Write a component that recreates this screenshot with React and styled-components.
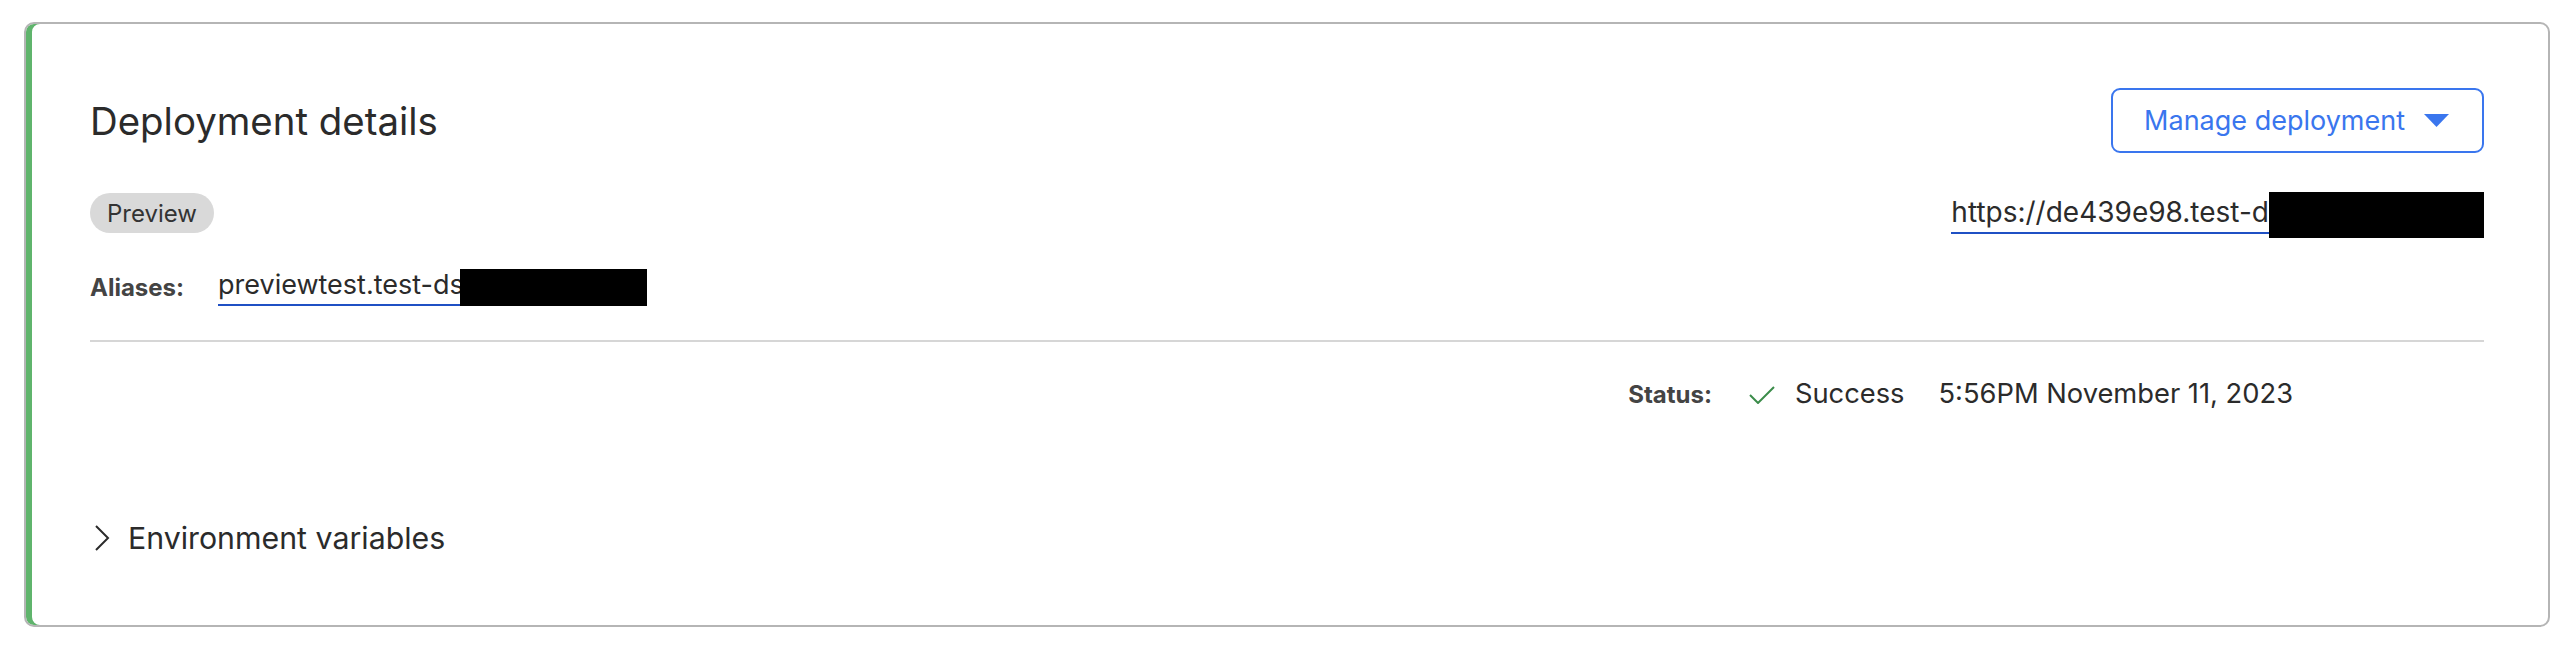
import styled, { createGlobalStyle } from "styled-components";

const GlobalStyle = createGlobalStyle`
  html, body {
    margin: 0;
    padding: 0;
    background: #ffffff;
  }
  body {
    font-family: Inter, "Noto Sans", "Liberation Sans", sans-serif;
    color: #2b2b2b;
  }
`;

const Card = styled.section`
  margin: 22px 22px 40px 24px;
  border: 2px solid #b5b5b5;
  border-radius: 10px;
  box-shadow: inset 6px 0 0 #5fb46c;
  padding: 64px 64px 67px 64px;
`;

const HeaderRow = styled.div`
  display: flex;
  justify-content: space-between;
  align-items: center;
  height: 65px;
`;

const Title = styled.h2`
  margin: 2px 0 0;
  font-size: 38.4px;
  font-weight: 400;
  line-height: 1.2;
  color: #2b2b2b;
`;

const ManageButton = styled.button`
  display: flex;
  align-items: center;
  gap: 19px;
  height: 65px;
  padding: 0 33px 0 31px;
  border: 2px solid #3a76ee;
  border-radius: 9px;
  background: #fff;
  color: #3a76ee;
  font-family: inherit;
  font-size: 27px;
  cursor: pointer;
`;

const MetaRow = styled.div`
  display: flex;
  justify-content: space-between;
  align-items: center;
  margin-top: 39px;
  height: 46px;
`;

const Badge = styled.span`
  display: inline-flex;
  align-items: center;
  height: 40px;
  margin-top: -4px;
  padding: 0 17px;
  border-radius: 20px;
  background: #d9d9d9;
  color: #333;
  font-size: 24px;
`;

const Link = styled.a`
  display: inline-flex;
  align-items: center;
  color: #2b2b2b;
  font-size: ${(p) => p.$size || 28}px;
  text-decoration: none;
`;

const LinkText = styled.span`
  line-height: 1.2;
  border-bottom: 2px solid #1f50c4;
  padding-bottom: ${(p) => p.$gap || 4}px;
`;

const Redacted = styled.span`
  display: inline-block;
  width: ${(p) => p.$w}px;
  height: ${(p) => p.$h}px;
  margin-left: ${(p) => p.$overlap || 0}px;
  background: #000;
`;

const AliasRow = styled.div`
  display: flex;
  align-items: center;
  margin-top: 31px;
  height: 37px;
`;

const Label = styled.span`
  font-size: 24px;
  font-weight: 700;
  color: #444;
  min-width: 128px;
`;

const Divider = styled.hr`
  margin: 34px 0 0;
  border: 0;
  height: 2px;
  background: #d6d6d6;
`;

const StatusRow = styled.div`
  display: flex;
  justify-content: flex-end;
  align-items: baseline;
  margin-top: 32px;
  padding-right: 191px;
  line-height: 40px;
  font-size: 27.3px;
`;

const StatusLabel = styled(Label)`
  min-width: 0;
  margin-right: 37px;
`;

const CheckIcon = styled.svg`
  align-self: center;
  width: 26px;
  height: 18px;
  margin-right: 20px;
`;

const StatusText = styled.span`
  margin-right: ${(p) => p.$gap || 0}px;
`;

const EnvToggle = styled.button`
  display: flex;
  align-items: center;
  gap: 18px;
  margin-top: 103px;
  padding: 0;
  border: 0;
  background: none;
  color: #2b2b2b;
  font-family: inherit;
  font-size: 30.3px;
  line-height: 40px;
  cursor: pointer;
`;

const Chevron = styled.svg`
  width: 16px;
  height: 26px;
  margin-left: 4px;
`;

export default function App() {
  return (
    <>
      <GlobalStyle />
      <Card>
        <HeaderRow>
          <Title>Deployment details</Title>
          <ManageButton>
            Manage deployment
            <svg width="25" height="13" viewBox="0 0 25 13">
              <path d="M0 0 H25 L12.5 13 Z" fill="#3a76ee" />
            </svg>
          </ManageButton>
        </HeaderRow>

        <MetaRow>
          <Badge>Preview</Badge>
          <Link href="#" $size={28}>
            <LinkText $gap={2}>https://de439e98.test-d</LinkText>
            <Redacted $w={215} $h={46} />
          </Link>
        </MetaRow>

        <AliasRow>
          <Label>Aliases:</Label>
          <Link href="#" $size={27}>
            <LinkText $gap={3}>previewtest.test-ds</LinkText>
            <Redacted $w={187} $h={37} $overlap={-4} />
          </Link>
        </AliasRow>

        <Divider />

        <StatusRow>
          <StatusLabel>Status:</StatusLabel>
          <CheckIcon viewBox="0 0 26 18">
            <path d="M1 9 L9 17 L25 1" fill="none" stroke="#3b8c4a" strokeWidth="2" />
          </CheckIcon>
          <StatusText $gap={34}>Success</StatusText>
          <StatusText>5:56PM November 11, 2023</StatusText>
        </StatusRow>

        <EnvToggle>
          <Chevron viewBox="0 0 16 26">
            <path d="M2 1 L14 13 L2 25" fill="none" stroke="#2b2b2b" strokeWidth="2" />
          </Chevron>
          Environment variables
        </EnvToggle>
      </Card>
    </>
  );
}
